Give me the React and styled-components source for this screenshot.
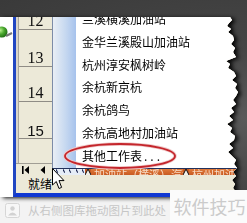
import React from "react";
import styled, { createGlobalStyle } from "styled-components";

const GlobalStyle = createGlobalStyle`
  html, body { margin: 0; padding: 0; background: #f3f3f3; }
  body { font-family: "Noto Sans CJK SC", "Liberation Sans", sans-serif; }
`;

// torn right edge of the screenshot: [y, x]
const edge = [
  [0, 230], [3, 232], [6, 229], [9, 227], [12, 231], [15, 228], [19, 233], [23, 234],
  [27, 231], [31, 235], [35, 233], [40, 236], [44, 226], [47, 230], [51, 228], [55, 234],
  [59, 236], [63, 232], [67, 237], [71, 235], [75, 238], [79, 236], [83, 233], [87, 236],
  [91, 231], [95, 234], [99, 229], [103, 233], [107, 227], [111, 232], [115, 230], [119, 235],
  [123, 234], [127, 229], [131, 233], [135, 228], [139, 232], [143, 236], [147, 234], [151, 237],
  [155, 233], [159, 236], [163, 232], [167, 235], [171, 233], [175, 236], [180, 234],
];
const tornClip = `polygon(0 0, ${edge.map(([y, x]) => `${x}px ${y}px`).join(", ")}, 0 180px)`;

const rows = [
  { n: "12", h: 13, serif: true },
  { n: "13", h: 37, serif: true },
  { n: "14", h: 35, serif: true },
  { n: "15", h: 37 },
  { n: "", h: 24 },
];

const items = [
  "兰溪横溪加油站",
  "金华兰溪殿山加油站",
  "杭州淳安枫树岭",
  "余杭新京杭",
  "余杭鸽鸟",
  "余杭高地村加油站",
];

const Page = styled.div`
  position: relative;
  width: 247px;
  height: 223px;
  overflow: hidden;
  background: #f3f3f3;
`;

const Shot = styled.div`
  height: 197px;
  box-sizing: border-box;
  padding-top: 17px;
  background: radial-gradient(ellipse at 100% 60%, #5a5a5a 0%, #464646 40%, #3a3a3a 100%);
`;

const PaperWrap = styled.div`
  width: 240px;
  height: 180px;
  filter: drop-shadow(3px 1px 2px rgba(0, 0, 0, 0.95));
`;

const Paper = styled.div`
  height: 100%;
  display: flex;
  background: #fff;
  clip-path: ${tornClip};
`;

const Gutter = styled.div`
  width: 13px;
  flex-shrink: 0;
  background: #fff;
  display: flex;
  flex-direction: column;
  padding-top: 9px;
  box-sizing: border-box;
`;

const Window = styled.div`
  flex: 1;
  display: flex;
  flex-direction: column;
  border-left: 3px solid #2146c2;
  border-bottom: 4px solid #1038d2;
  background: #ece9d8;
  min-width: 0;
`;

const Main = styled.div`
  height: 158px;
  display: flex;
`;

const LeftCol = styled.div`
  width: 36px;
  flex-shrink: 0;
  display: flex;
  flex-direction: column;
  background: #d9d5c9;
`;

const RowHeads = styled.div`
  flex: 1;
  margin-left: 2px;
  border-left: 1px solid #aaa69c;
  background: #ece9d8;
  display: flex;
  flex-direction: column;
`;

const RowHead = styled.div`
  height: ${(p) => p.$h}px;
  box-sizing: border-box;
  border-bottom: 1px solid #8f8c85;
  display: flex;
  align-items: flex-end;
  justify-content: center;
  font-family: ${(p) => (p.$serif ? '"Liberation Serif", serif' : '"Liberation Sans", sans-serif')};
  font-size: ${(p) => (p.$serif ? 16 : 15)}px;
  line-height: 1;
  color: #111;
  &:last-child { border-bottom: none; }
`;

const TabNav = styled.div`
  height: 12px;
  box-sizing: border-box;
  border-top: 1px solid #a19e95;
  background: #ece9d8;
  display: flex;
  align-items: center;
  gap: 10px;
  padding-left: 6px;
`;

const RightCol = styled.div`
  flex: 1;
  min-width: 0;
  display: flex;
  flex-direction: column;
`;

const Menu = styled.div`
  flex: 1;
  display: flex;
  overflow: hidden;
  background: #fff;
  border-left: 1px solid #7d8ca8;
  border-bottom: 1px solid #22315c;
`;

const IconStrip = styled.div`
  width: 23px;
  flex-shrink: 0;
  background: linear-gradient(to right, #e9eef5, #c6d8f0 55%, #a6c2ec);
`;

const Items = styled.div`
  flex: 1;
  margin-top: -9px;
  padding-left: 6px;
`;

const Item = styled.div`
  height: 22.8px;
  line-height: 22.8px;
  font-size: 12px;
  color: #000;
  white-space: nowrap;
`;

const Dots = styled.span`
  letter-spacing: 3px;
  margin-left: 2px;
`;

const TabStrip = styled.div`
  height: 6px;
  display: flex;
  overflow: hidden;
`;

const ScrollBit = styled.div`
  width: 33px;
  flex-shrink: 0;
  background: #e6edf7;
  display: flex;
  align-items: flex-start;
  gap: 4px;
  padding-left: 4px;
  box-sizing: border-box;
`;

const Tab = styled.div`
  flex: ${(p) => (p.$grow ? 1 : "none")};
  width: ${(p) => (p.$w ? `${p.$w}px` : "auto")};
  height: 6px;
  background: linear-gradient(#e07a3a, #c85a22);
  color: #f8dcc6;
  font-size: 11px;
  line-height: 11px;
  white-space: nowrap;
  overflow: hidden;
  padding-left: 3px;
`;

const StatusBar = styled.div`
  height: 18px;
  padding-left: 12px;
  font-size: 12px;
  line-height: 18px;
  color: #000;
  background: #ece9d8;
`;

const Footer = styled.div`
  height: 26px;
  display: flex;
  align-items: center;
  gap: 8px;
  padding-left: 5px;
  color: #c6c6c6;
  font-size: 11.5px;
`;

const Brand = styled.div`
  position: absolute;
  right: 0;
  bottom: 0;
  width: 77px;
  height: 33px;
  background: #fbfbfb;
  color: #cbcbcb;
  font-size: 18px;
  line-height: 33px;
  text-align: center;
  padding-left: 2px;
  box-sizing: border-box;
`;

const Ring = styled.svg`
  position: absolute;
  left: 63px;
  top: 142px;
`;

const Cursor = styled.svg`
  position: absolute;
  left: 52px;
  top: 168px;
`;

const Ball = () => (
  <svg width="13" height="14" viewBox="0 0 13 14">
    <defs>
      <radialGradient id="g" cx="0.35" cy="0.35" r="0.7">
        <stop offset="0" stopColor="#b6f08a" />
        <stop offset="0.5" stopColor="#4aa82e" />
        <stop offset="1" stopColor="#1d6a12" />
      </radialGradient>
    </defs>
    <circle cx="2" cy="6" r="5.5" fill="url(#g)" />
    <path d="M6 10 L12 7" stroke="#777" strokeWidth="2" />
  </svg>
);

const Sep = () => (
  <svg width="6" height="6" viewBox="0 0 6 6" style={{ flexShrink: 0, background: "#c85a22" }}>
    <path d="M0 6 L3 0 L6 6" fill="#f2f0ea" stroke="#111" strokeWidth="1" />
  </svg>
);

const First = () => (
  <svg width="8" height="8" viewBox="0 0 8 8">
    <rect x="0" y="0" width="1.6" height="8" fill="#000" />
    <path d="M7 0 L2.5 4 L7 8 Z" fill="#000" />
  </svg>
);

const Prev = () => (
  <svg width="6" height="8" viewBox="0 0 6 8">
    <path d="M5 0 L0.5 4 L5 8 Z" fill="#000" />
  </svg>
);

const Tick = () => (
  <svg width="3" height="4" viewBox="0 0 3 4">
    <path d="M0 0 L2 4" stroke="#1b2550" strokeWidth="1.2" />
  </svg>
);

const PicIcon = () => (
  <svg width="15" height="15" viewBox="0 0 15 15">
    <rect x="0.5" y="0.5" width="14" height="14" rx="2" fill="#f7f7f7" stroke="#d6d6d6" />
    <circle cx="7.5" cy="5.5" r="2.2" fill="#d2d2d2" />
    <path d="M3 12.5 Q7.5 6.5 12 12.5 Z" fill="#d2d2d2" />
  </svg>
);

export default function App() {
  return (
    <Page>
      <GlobalStyle />
      <Shot>
        <PaperWrap>
          <Paper>
            <Gutter>
              <Ball />
            </Gutter>
            <Window>
              <Main>
                <LeftCol>
                  <RowHeads>
                    {rows.map((r) => (
                      <RowHead key={r.n || "blank"} $h={r.h} $serif={r.serif}>
                        {r.n}
                      </RowHead>
                    ))}
                  </RowHeads>
                  <TabNav>
                    <First />
                    <Prev />
                  </TabNav>
                </LeftCol>
                <RightCol>
                  <Menu>
                    <IconStrip />
                    <Items>
                      {items.map((t) => (
                        <Item key={t}>{t}</Item>
                      ))}
                      <Item>
                        其他工作表<Dots>...</Dots>
                      </Item>
                    </Items>
                  </Menu>
                  <TabStrip>
                    <ScrollBit>
                      <Tick />
                      <Tick />
                      <Tick />
                      <Tick />
                      <Tick />
                    </ScrollBit>
                    <Sep />
                    <Tab $w={89}>加油站（横溪）汽油</Tab>
                    <Sep />
                    <Tab $grow>杭州加油站</Tab>
                  </TabStrip>
                </RightCol>
              </Main>
              <StatusBar>就绪</StatusBar>
            </Window>
          </Paper>
        </PaperWrap>
      </Shot>
      <Footer>
        <PicIcon />
        <span>从右侧图库拖动图片到此处</span>
      </Footer>
      <Brand>软件技巧</Brand>
      <Ring width="114" height="28" viewBox="0 0 114 28">
        <ellipse cx="57" cy="14" rx="55" ry="12" fill="none" stroke="#f0c8c8" strokeWidth="3.5" />
        <ellipse cx="57" cy="14" rx="55" ry="12" fill="none" stroke="#c4262c" strokeWidth="1.8" />
      </Ring>
      <Cursor width="13" height="22" viewBox="0 0 13 22">
        <path d="M0.5 0.5 L0.5 17 L4.3 13.5 L7 20.5 L9.6 19.4 L7 12.6 L12 12.6 Z" fill="#fff" stroke="#000" strokeWidth="1" strokeLinejoin="round" />
      </Cursor>
    </Page>
  );
}
